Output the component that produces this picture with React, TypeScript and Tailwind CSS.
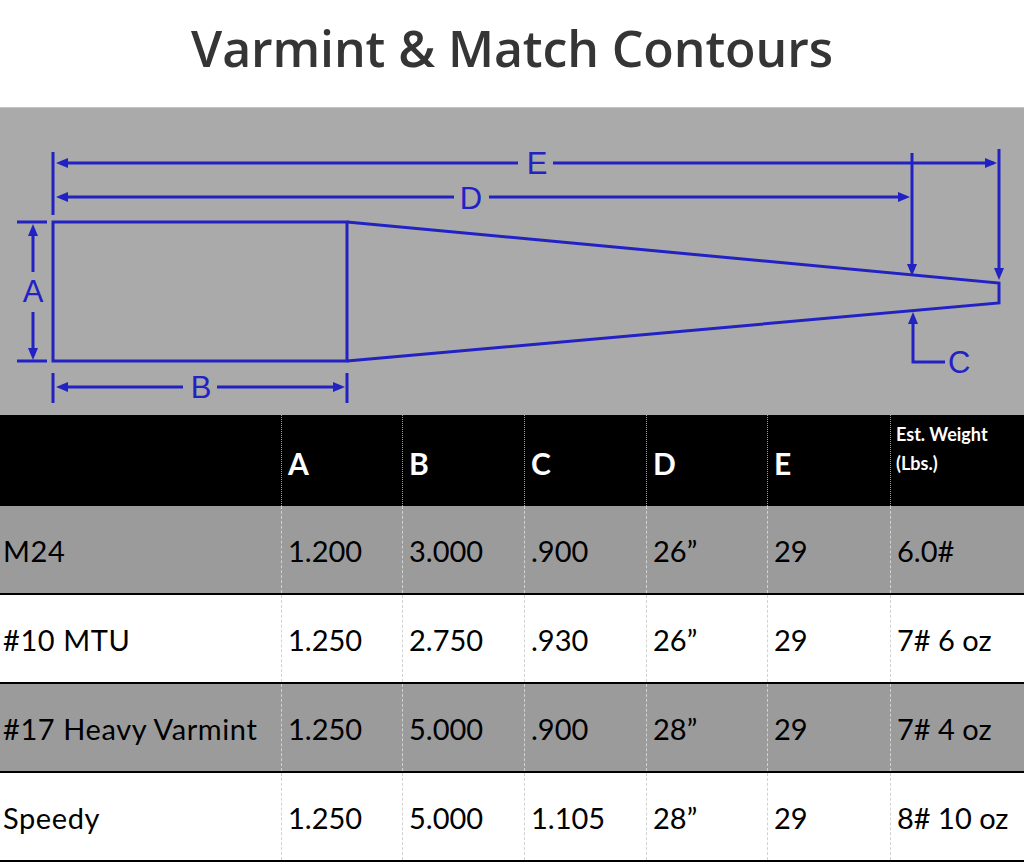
import React from "react";

const BLUE = "#2222c4";

const rows = [
  { name: "M24", a: "1.200", b: "3.000", c: ".900", d: "26”", e: "29", w: "6.0#", shade: true },
  { name: "#10 MTU", a: "1.250", b: "2.750", c: ".930", d: "26”", e: "29", w: "7# 6 oz", shade: false },
  { name: "#17 Heavy Varmint", a: "1.250", b: "5.000", c: ".900", d: "28”", e: "29", w: "7# 4 oz", shade: true },
  { name: "Speedy", a: "1.250", b: "5.000", c: "1.105", d: "28”", e: "29", w: "8# 10 oz", shade: false },
];

const gridCols = "grid grid-cols-[281px_121px_122px_122px_121px_123px_1fr]";

const Arrow = ({ x, y, dir }: { x: number; y: number; dir: "l" | "r" | "u" | "d" }) => {
  const pts = {
    l: `${x},${y} ${x + 12},${y - 5} ${x + 12},${y + 5}`,
    r: `${x},${y} ${x - 12},${y - 5} ${x - 12},${y + 5}`,
    u: `${x},${y} ${x - 5},${y + 12} ${x + 5},${y + 12}`,
    d: `${x},${y} ${x - 5},${y - 12} ${x + 5},${y - 12}`,
  }[dir];
  return <polygon points={pts} fill={BLUE} />;
};

const Diagram = () => (
  <div className="h-[308px] bg-[#aaaaaa] border-t border-[#c4c4c4]">
    <svg width="1024" height="307" viewBox="0 108 1024 307" className="block">
      <g stroke={BLUE} strokeWidth="3" fill="none">
        {/* barrel outline */}
        <path d="M53 222 H347 V361 H53 Z" />
        <path d="M347 222 L999 283 V303 L347 361" />
        {/* extension line */}
        <path d="M53 152 V215" />
        {/* E */}
        <path d="M60 163 H518 M553 163 H994" />
        <path d="M999 149 V272" />
        {/* D */}
        <path d="M60 197 H454 M489 197 H906" />
        <path d="M912 153 V268" />
        {/* A */}
        <path d="M17 222 H47 M17 361 H47" />
        <path d="M33 232 V272 M33 312 V352" />
        {/* B */}
        <path d="M53 373 V403 M347 373 V403" />
        <path d="M62 387 H183 M217 387 H338" />
        {/* C */}
        <path d="M913 322 V362 H945" />
      </g>
      <Arrow x={56} y={163} dir="l" />
      <Arrow x={997} y={163} dir="r" />
      <Arrow x={56} y={197} dir="l" />
      <Arrow x={910} y={197} dir="r" />
      <Arrow x={912} y={276} dir="d" />
      <Arrow x={999} y={280} dir="d" />
      <Arrow x={33} y={224} dir="u" />
      <Arrow x={33} y={360} dir="d" />
      <Arrow x={56} y={387} dir="l" />
      <Arrow x={345} y={387} dir="r" />
      <Arrow x={913} y={312} dir="u" />
      <g fill={BLUE} fontFamily="'Liberation Sans', Arial, sans-serif" fontSize="31">
        <text x="537" y="174" textAnchor="middle">E</text>
        <text x="471" y="209" textAnchor="middle">D</text>
        <text x="33" y="302" textAnchor="middle">A</text>
        <text x="201" y="398" textAnchor="middle">B</text>
        <text x="948" y="373">C</text>
      </g>
    </svg>
  </div>
);

const Cell = ({ children, first }: { children: React.ReactNode; first?: boolean }) => (
  <div
    className={
      first
        ? "flex items-center pl-[3px] pt-[3px] tracking-[0.6px]"
        : "flex items-center pl-[6px] pt-[3px] border-l border-dashed border-[#d2d2d2]"
    }
  >
    {children}
  </div>
);

export default function App() {
  return (
    <div className="w-[1024px] h-[862px] bg-white overflow-hidden font-['Lato',sans-serif]">
      <div className="h-[107px] flex items-center justify-center pb-[12px]">
        <h1 className="font-['Open_Sans',sans-serif] font-semibold text-[50px] leading-none text-[#353535] tracking-[-0.1px]">
          Varmint &amp; Match Contours
        </h1>
      </div>
      <Diagram />
      <div className={`${gridCols} h-[91px] bg-black text-white`}>
        <div />
        {["A", "B", "C", "D", "E"].map((h) => (
          <div key={h} className="flex items-center pl-[6px] pt-[6px] border-l border-dotted border-[#9a9a9a] text-[30px] font-bold">
            {h}
          </div>
        ))}
        <div className="pl-[5px] pt-[5px] border-l border-dotted border-[#9a9a9a] text-[18px] font-bold leading-[29px]">
          <div>Est. Weight</div>
          <div>(Lbs.)</div>
        </div>
      </div>
      {rows.map((r) => (
        <div
          key={r.name}
          className={`${gridCols} h-[89px] border-b-[2px] border-black text-[29px] text-black ${r.shade ? "bg-[#9b9b9b]" : "bg-white"}`}
        >
          <Cell first>{r.name}</Cell>
          <Cell>{r.a}</Cell>
          <Cell>{r.b}</Cell>
          <Cell>{r.c}</Cell>
          <Cell>{r.d}</Cell>
          <Cell>{r.e}</Cell>
          <Cell>{r.w}</Cell>
        </div>
      ))}
    </div>
  );
}
